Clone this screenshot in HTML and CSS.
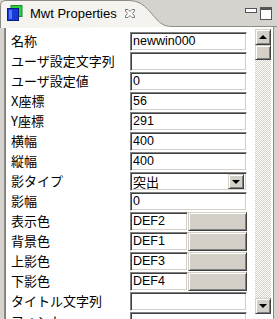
FILE: index.html
```html
<!DOCTYPE html>
<html>
	<head>
		<meta charset="utf-8">
		<link rel="stylesheet" href="styles.css">
		<title>Mwt Properties</title>
	</head>
	<body>
		<div class="view">
			<div class="header">
				<svg class="tab-shape" width="277" height="28" viewBox="0 0 277 28">
					<path d="M0.5 28 V6 Q0.5 0.5 6 0.5 H128 C140 0.5 145 6 152 14 C158 21 162 26.5 172 26.5 H277" fill="#f4f3ef" stroke="#8d8b86"/>
				</svg>
				<div class="tab">
					<svg class="tab-icon" width="17" height="16" viewBox="0 0 17 16">
						<rect x="5" y="0.5" width="11" height="11" fill="#2ecf3a" stroke="#1d8a27"/>
						<rect x="1.5" y="3.5" width="11" height="12" fill="#1838d8" stroke="#0b1a80"/>
						<rect x="3" y="5" width="3" height="9" fill="#4f7cf5"/>
					</svg>
					<span class="tab-title">Mwt Properties</span>
					<svg class="tab-close" width="10" height="9" viewBox="0 0 10 9">
						<path d="M0.5 0.5 H3 L5 2.5 L7 0.5 H9.5 V2 L7.5 4.5 L9.5 7 V8.5 H7 L5 6.5 L3 8.5 H0.5 V7 L2.5 4.5 L0.5 2 Z" fill="#fff" stroke="#777"/>
					</svg>
				</div>
				<div class="view-tools">
					<span class="tool-min"></span>
					<span class="tool-max"></span>
				</div>
			</div>
			<div class="frame">
				<div class="sheet">
					<div class="row"><span class="label">名称</span><span class="field">newwin000</span></div>
					<div class="row"><span class="label">ユーザ設定文字列</span><span class="field"></span></div>
					<div class="row"><span class="label">ユーザ設定値</span><span class="field">0</span></div>
					<div class="row"><span class="label">X座標</span><span class="field">56</span></div>
					<div class="row"><span class="label">Y座標</span><span class="field">291</span></div>
					<div class="row"><span class="label">横幅</span><span class="field">400</span></div>
					<div class="row"><span class="label">縦幅</span><span class="field">400</span></div>
					<div class="row"><span class="label">影タイプ</span>
						<span class="field select"><span class="select-text">突出</span><span class="select-btn"></span></span>
					</div>
					<div class="row"><span class="label">影幅</span><span class="field">0</span></div>
					<div class="row"><span class="label">表示色</span><span class="color"><span class="field">DEF2</span><span class="swatch"></span></span></div>
					<div class="row"><span class="label">背景色</span><span class="color"><span class="field">DEF1</span><span class="swatch"></span></span></div>
					<div class="row"><span class="label">上影色</span><span class="color"><span class="field">DEF3</span><span class="swatch"></span></span></div>
					<div class="row"><span class="label">下影色</span><span class="color"><span class="field">DEF4</span><span class="swatch"></span></span></div>
					<div class="row"><span class="label">タイトル文字列</span><span class="field"></span></div>
					<div class="row"><span class="label">フォント</span><span class="field"></span></div>
				</div>
				<div class="scrollbar">
					<div class="sb-btn sb-up"></div>
					<div class="sb-thumb"></div>
					<div class="sb-track"></div>
					<div class="sb-btn sb-down"></div>
				</div>
			</div>
		</div>
	</body>
</html>
```

FILE: styles.css
```css
html, body {
	margin: 0;
	padding: 0;
}
body {
	font-family: "Noto Sans CJK JP", "Liberation Sans", sans-serif;
	background: #d6d3ce;
}
.view {
	width: 277px;
	height: 319px;
	overflow: hidden;
	background: #d6d3ce;
}

.header {
	position: relative;
	height: 27px;
	display: flex;
	align-items: flex-start;
	justify-content: space-between;
}
.tab-shape {
	position: absolute;
	left: 0;
	top: 0;
}
.tab {
	position: relative;
	display: flex;
	align-items: center;
	height: 20px;
	padding: 3px 0 0 6px;
}
.tab-icon {
	margin-right: 7px;
}
.tab-title {
	font-family: "Liberation Sans", sans-serif;
	font-size: 13px;
	color: #000;
}
.tab-close {
	margin-left: 8px;
}
.view-tools {
	position: relative;
	display: flex;
	align-items: flex-start;
	gap: 3px;
	padding: 7px 5px 0 0;
}
.tool-min {
	width: 10px;
	height: 3px;
	margin-top: 1px;
	border: 1px solid #555;
	background: #fff;
}
.tool-max {
	width: 10px;
	height: 9px;
	border: 1px solid #555;
	border-top-width: 3px;
	background: #fff;
}

.frame {
	display: flex;
	width: 268px;
	height: 292px;
	margin-left: 4px;
	border-left: 1px solid #8d8b86;
	border-right: 1px solid #8d8b86;
	background: #fff;
	box-shadow: inset 1px 0 #808080;
}
.sheet {
	flex: 1;
	overflow: hidden;
	padding: 5px 0 0 6px;
}
.row {
	display: grid;
	grid-template-columns: 119px 117px;
	align-items: center;
	height: 19px;
	margin-bottom: 1px;
}
.label {
	font-size: 13px;
	line-height: 15px;
	color: #000;
	white-space: nowrap;
	margin-top: -2px;
}
.field {
	box-sizing: border-box;
	height: 19px;
	padding: 0 2px;
	border-top: 1px solid #808080;
	border-left: 1px solid #808080;
	border-right: 1px solid #fff;
	border-bottom: 1px solid #fff;
	box-shadow: inset 1px 1px #404040, inset -1px -1px #d4d0c8;
	background: #fff;
	font-family: "Liberation Sans", sans-serif;
	font-size: 12.5px;
	line-height: 17px;
	color: #000;
}
.select {
	display: flex;
	justify-content: space-between;
	align-items: center;
	padding-right: 2px;
}
.select-text {
	font-family: "Noto Sans CJK JP", sans-serif;
	font-size: 13px;
}
.select-btn {
	position: relative;
	box-sizing: border-box;
	width: 16px;
	height: 15px;
	background: #d4d0c8;
	border-top: 1px solid #d4d0c8;
	border-left: 1px solid #d4d0c8;
	border-right: 1px solid #404040;
	border-bottom: 1px solid #404040;
	box-shadow: inset 1px 1px #fff, inset -1px -1px #808080;
}
.select-btn::after,
.sb-btn::after {
	content: "";
	position: absolute;
	left: 50%;
	top: 50%;
	margin: -2px 0 0 -4px;
	border-left: 4px solid transparent;
	border-right: 4px solid transparent;
	border-top: 4px solid #000;
}
.color {
	display: grid;
	grid-template-columns: 58px 59px;
}
.swatch {
	box-sizing: border-box;
	height: 19px;
	background: #d4d0c8;
	border-top: 1px solid #d4d0c8;
	border-left: 1px solid #d4d0c8;
	border-right: 1px solid #404040;
	border-bottom: 1px solid #404040;
	box-shadow: inset 1px 1px #fff, inset -1px -1px #808080;
}

.scrollbar {
	display: flex;
	flex-direction: column;
	width: 16px;
	height: 285px;
	margin: 2px 2px 0 0;
}
.sb-btn,
.sb-thumb {
	position: relative;
	box-sizing: border-box;
	background: #d4d0c8;
	border-top: 1px solid #d4d0c8;
	border-left: 1px solid #d4d0c8;
	border-right: 1px solid #404040;
	border-bottom: 1px solid #404040;
	box-shadow: inset 1px 1px #fff, inset -1px -1px #808080;
}
.sb-btn {
	height: 16px;
}
.sb-up::after {
	border-top: 0;
	border-bottom: 4px solid #000;
}
.sb-thumb {
	height: 15px;
}
.sb-track {
	flex: 1;
	background-color: #d4d0c8;
	background-image: conic-gradient(#fff 25%, #d4d0c8 0 50%, #fff 0 75%, #d4d0c8 0);
	background-size: 2px 2px;
}
```
